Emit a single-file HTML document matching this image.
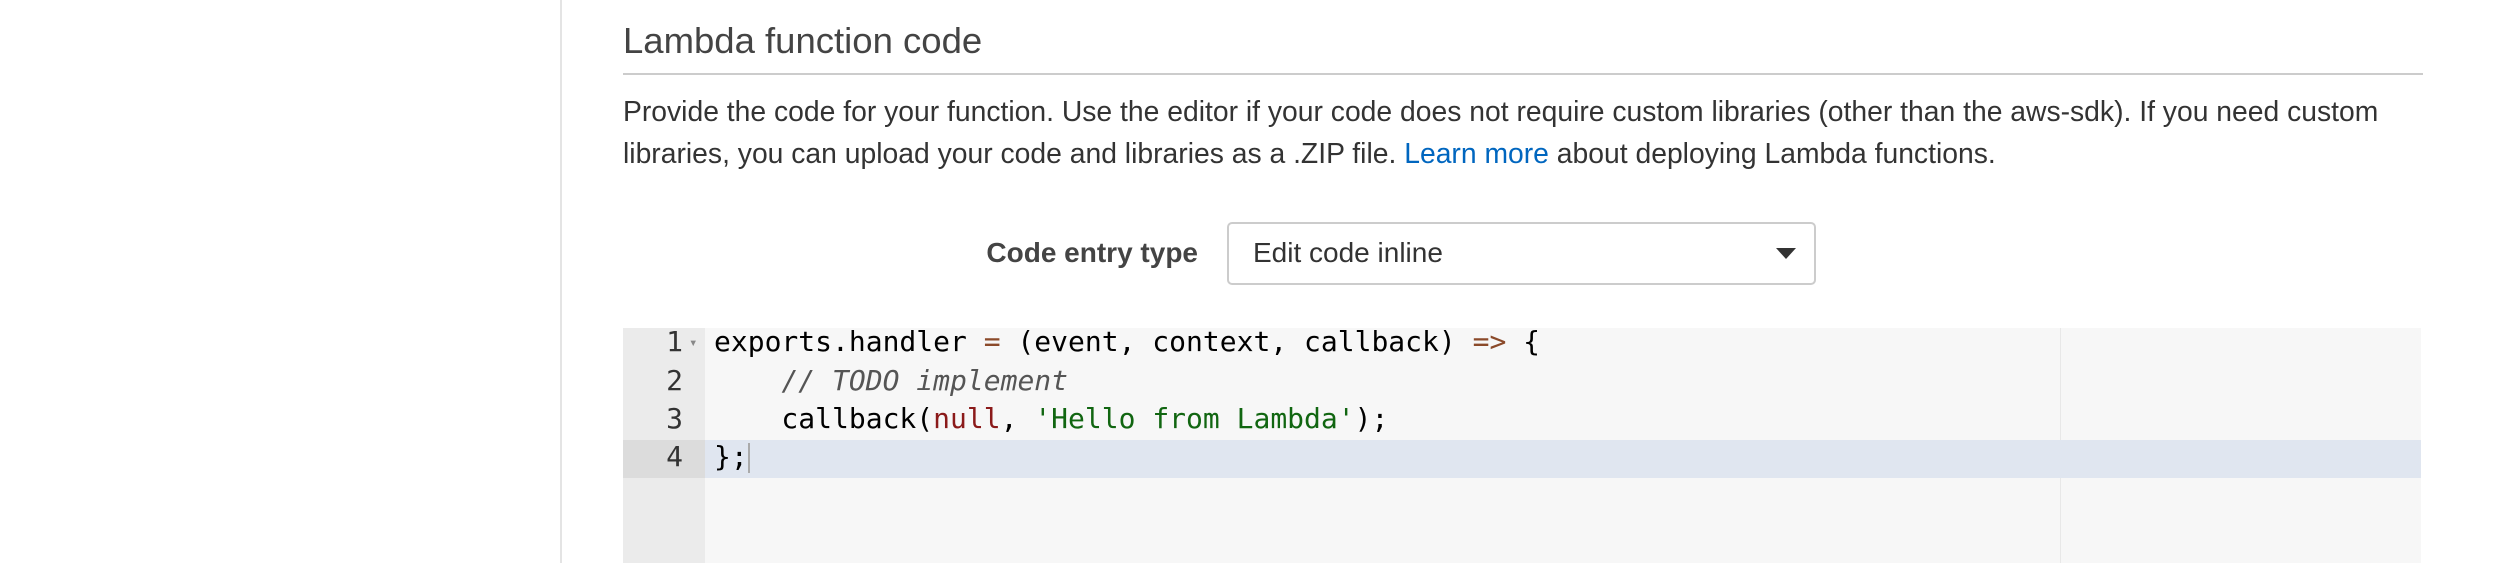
<!DOCTYPE html>
<html><head><meta charset="utf-8"><style>
*{margin:0;padding:0;box-sizing:border-box}
body{width:2506px;height:563px;background:#fff;position:relative;overflow:hidden;font-family:"Liberation Sans",Arial,sans-serif;color:#444}
.vb{position:absolute;left:560px;top:0;width:2px;height:563px;background:#e4e4e4}
h1{position:absolute;left:623px;top:20px;font-size:36.5px;font-weight:normal;color:#444;white-space:nowrap}
.hr{position:absolute;left:623px;top:73px;width:1800px;height:2px;background:#ccc}
.p{position:absolute;left:623px;top:90px;width:1810px;font-size:28.3px;line-height:42px;color:#333}
.p a{color:#0066bf;text-decoration:none}
.lbl{position:absolute;right:1308px;top:237px;font-size:28px;font-weight:bold;color:#444;white-space:nowrap}
.sel{position:absolute;left:1227px;top:222px;width:589px;height:63px;border:2px solid #ccc;border-radius:5px;font-size:28px;color:#333;padding:13px 0 0 24px}
.tri{position:absolute;left:1776px;top:248px;width:0;height:0;border-left:10px solid transparent;border-right:10px solid transparent;border-top:11px solid #333}
.ed{position:absolute;left:623px;top:328px;width:1798px;height:235px;background:#f7f7f7}
.gut{position:absolute;left:623px;top:328px;width:82px;height:235px;background:#ebebeb}
.pm{position:absolute;left:2060px;top:328px;width:1px;height:235px;background:#e8e8e8}
.hl{position:absolute;left:705px;top:440px;width:1716px;height:38px;background:#e0e6f0}
.hlg{position:absolute;left:623px;top:440px;width:82px;height:38px;background:#dcdcdc}
.code{position:absolute;left:623px;top:323px;font-family:"DejaVu Sans Mono","Liberation Mono",monospace;font-size:28px;line-height:38px;color:#000;white-space:pre}
.ln{display:inline-block;width:60px;text-align:right;color:#333}
.fd{display:inline-block;width:31px;color:#888;font-size:14px;vertical-align:middle;padding-left:6px}
.op{color:#8b4a2a}.cm{color:#555;font-style:italic}.kw{color:#8b1a1a}.st{color:#116611}
.cur{display:inline-block;width:2px;height:30px;background:#aaa;vertical-align:middle}
</style></head><body>
<div class="vb"></div>
<h1>Lambda function code</h1>
<div class="hr"></div>
<div class="p">Provide the code for your function. Use the editor if your code does not require custom libraries (other than the aws-sdk). If you need custom libraries, you can upload your code and libraries as a .ZIP file. <a>Learn more</a> about deploying Lambda functions.</div>
<div class="lbl">Code entry type</div>
<div class="sel">Edit code inline</div>
<div class="tri"></div>
<div class="ed"></div><div class="gut"></div><div class="pm"></div><div class="hl"></div><div class="hlg"></div>
<div class="code"><span class="ln">1</span><span class="fd">▾</span>exports.handler <span class="op">=</span> (event, context, callback) <span class="op">=&gt;</span> {
<span class="ln">2</span><span class="fd"></span>    <span class="cm">// TODO implement</span>
<span class="ln">3</span><span class="fd"></span>    callback(<span class="kw">null</span>, <span class="st">'Hello from Lambda'</span>);
<span class="ln">4</span><span class="fd"></span>};<span class="cur"></span></div>
</body></html>
